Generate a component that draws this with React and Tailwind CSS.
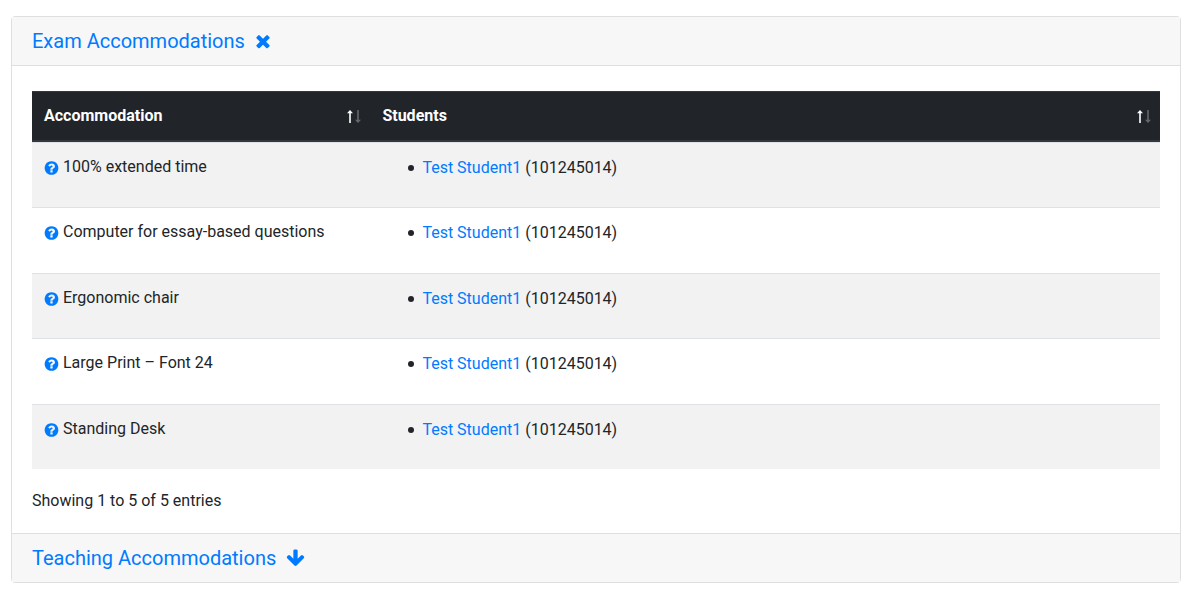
import React from "react";

const rows = [
  "100% extended time",
  "Computer for essay-based questions",
  "Ergonomic chair",
  "Large Print – Font 24",
  "Standing Desk",
];

// Font Awesome 4 glyphs, y axis points up
const ICONS = {
  times: {
    width: 1408,
    path: "M1298 214q0 -40 -28 -68l-136 -136q-28 -28 -68 -28t-68 28l-294 294l-294 -294q-28 -28 -68 -28t-68 28l-136 136q-28 28 -28 68t28 68l294 294l-294 294q-28 28 -28 68t28 68l136 136q28 28 68 28t68 -28l294 -294l294 294q28 28 68 28t68 -28l136 -136q28 -28 28 -68t-28 -68l-294 -294l294 -294q28 -28 28 -68z",
  },
  arrowDown: {
    width: 1664,
    path: "M1611 704q0 -53 -37 -90l-651 -652q-39 -37 -91 -37q-53 0 -90 37l-651 652q-38 36 -38 90q0 53 38 91l74 75q39 37 91 37q53 0 90 -37l294 -294v704q0 52 38 90t90 38h128q52 0 90 -38t38 -90v-704l294 294q37 37 90 37q52 0 91 -37l75 -75q37 -39 37 -91z",
  },
  question: {
    width: 1536,
    path: "M896 160v192q0 14 -9 23t-23 9h-192q-14 0 -23 -9t-9 -23v-192q0 -14 9 -23t23 -9h192q14 0 23 9t9 23zM1152 832q0 88 -55.5 163t-138.5 116t-170 41q-243 0 -371 -213q-15 -24 8 -42l132 -100q7 -6 19 -6q16 0 25 12q53 68 86 92q34 24 86 24q48 0 85.5 -26t37.5 -59q0 -38 -20 -61t-68 -45q-63 -28 -115.5 -86.5t-52.5 -125.5v-36q0 -14 9 -23t23 -9h192q14 0 23 9t9 23q0 19 21.5 49.5t54.5 49.5q32 18 49 28.5t46 35t44.5 48t28 60.5t12.5 81zM1536 640q0 -209 -103 -385.5t-279.5 -279.5t-385.5 -103t-385.5 103t-279.5 279.5t-103 385.5t103 385.5t279.5 279.5t385.5 103t385.5 -103t279.5 -279.5t103 -385.5z",
  },
};

const Icon = ({ name, className }) => (
  <svg
    viewBox={`0 -1536 ${ICONS[name].width} 1792`}
    fill="currentColor"
    aria-hidden="true"
    className={className}
  >
    <path transform="scale(1 -1)" d={ICONS[name].path} />
  </svg>
);

const SortArrows = () => (
  <svg viewBox="0 0 16 13" fill="currentColor" aria-hidden="true" className="h-[13px] w-4">
    <path d="M4 0L7 3.2H4.8V13H3.2V3.2H1z" />
    <path className="opacity-30" d="M12 13L9 9.8H11.2V0H12.8V9.8H15z" />
  </svg>
);

const HeaderCell = ({ children, className }) => (
  <th scope="col" className={`h-[51px] border-b-2 border-t border-b-[#32383e] border-t-[#32383e] p-0 text-left font-bold ${className}`}>
    <button type="button" className="flex w-full items-center justify-between pl-3 pr-2">
      {children}
      <SortArrows />
    </button>
  </th>
);

const AccommodationTable = () => (
  <table className="w-full table-fixed border-separate border-spacing-0">
    <thead className="bg-[#212529] text-white">
      <tr>
        <HeaderCell className="w-[30%]">Accommodation</HeaderCell>
        <HeaderCell className="w-[70%]">Students</HeaderCell>
      </tr>
    </thead>
    <tbody>
      {rows.map((name) => (
        <tr key={name} className="h-[65px] align-top odd:bg-[#f2f2f2] even:h-[66px]">
          <td className="border-t border-[#dee2e6] px-3 py-3">
            <div className="flex items-center gap-1">
              <a href="#help" aria-label={`About ${name}`} className="pt-0.5 text-[#007bff]">
                <Icon name="question" className="h-4 w-[15px]" />
              </a>
              {name}
            </div>
          </td>
          <td className="border-t border-[#dee2e6] px-3 py-[13px]">
            <ul className="pl-[26px]">
              <li className="flex items-center gap-2 before:size-[6px] before:rounded-full before:bg-[#212529] before:content-['']">
                <span>
                  <a href="#student" className="text-[#007bff]">Test Student1</a> (101245014)
                </span>
              </li>
            </ul>
          </td>
        </tr>
      ))}
    </tbody>
  </table>
);

export default function App() {
  return (
    <main className="py-4 pl-[11px] pr-[10px] font-['Roboto',sans-serif] text-base text-[#212529]">
      <div className="rounded border border-[#dfdfdf]">
        <h5 className="border-b border-[#dfdfdf] bg-[#f7f7f7] px-5 py-3 text-xl leading-6">
          <button type="button" className="flex items-center gap-[10px] text-[#007bff]">
            Exam Accommodations <Icon name="times" className="h-5 w-4" />
          </button>
        </h5>
        <div className="px-5 pb-5 pt-[25px]">
          <AccommodationTable />
          <p className="pt-5">Showing 1 to 5 of 5 entries</p>
        </div>
        <h5 className="border-t border-[#dfdfdf] bg-[#f7f7f7] px-5 py-3 text-xl leading-6">
          <button type="button" className="flex items-center gap-[10px] text-[#007bff]">
            Teaching Accommodations <Icon name="arrowDown" className="h-5 w-[19px]" />
          </button>
        </h5>
      </div>
    </main>
  );
}
